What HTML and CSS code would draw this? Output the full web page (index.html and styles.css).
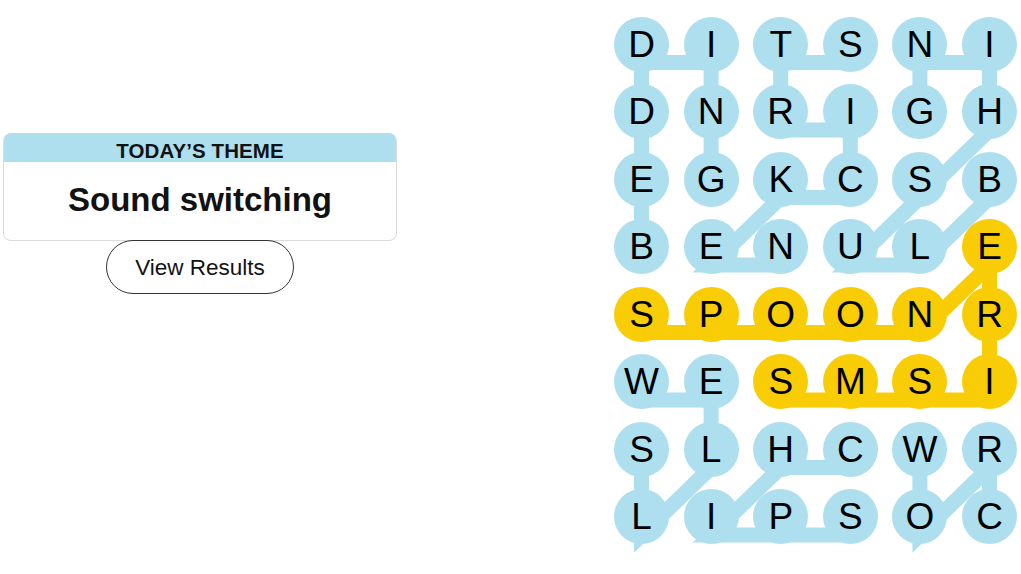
FILE: index.html
```html
<!DOCTYPE html>
<html lang="en">
<head>
<meta charset="utf-8">
<title>Strands</title>
<link rel="stylesheet" href="styles.css">
</head>
<body>
<main class="page">
  <section class="hint">
    <div class="theme-card">
      <div class="theme-head">TODAY’S THEME</div>
      <div class="theme-body">Sound switching</div>
    </div>
    <button class="results-btn" type="button">View Results</button>
  </section>

  <section class="board">
    <svg class="paths" width="403" height="528" viewBox="0 0 403 528" aria-hidden="true">
      <g fill="none" stroke-width="15" stroke-linejoin="miter">
        <polyline class="line-blue" points="27.5,248 27.5,180.5 27.5,113 27.5,45.5 97.1,45.5 97.1,113 97.1,180.5"/>
        <polyline class="line-blue" points="236.3,45.5 166.7,45.5 166.7,113 236.3,113 236.3,180.5 166.7,180.5 97.1,248 166.7,248"/>
        <polyline class="line-blue" points="375.5,180.5 305.9,248 236.3,248 305.9,180.5 375.5,113 375.5,45.5 305.9,45.5 305.9,113"/>
        <polyline class="line-blue" points="27.5,383 97.1,383 97.1,450.5 27.5,518 27.5,450.5"/>
        <polyline class="line-blue" points="236.3,450.5 166.7,450.5 97.1,518 166.7,518 236.3,518"/>
        <polyline class="line-blue" points="375.5,518 375.5,450.5 305.9,518 305.9,450.5"/>
        <polyline class="line-yellow" points="27.5,315.5 97.1,315.5 166.7,315.5 236.3,315.5 305.9,315.5 375.5,248 375.5,315.5 375.5,383 305.9,383 236.3,383 166.7,383"/>
      </g>
    </svg>

    <div class="cell">D</div><div class="cell">I</div><div class="cell">T</div><div class="cell">S</div><div class="cell">N</div><div class="cell">I</div>
    <div class="cell">D</div><div class="cell">N</div><div class="cell">R</div><div class="cell">I</div><div class="cell">G</div><div class="cell">H</div>
    <div class="cell">E</div><div class="cell">G</div><div class="cell">K</div><div class="cell">C</div><div class="cell">S</div><div class="cell">B</div>
    <div class="cell">B</div><div class="cell">E</div><div class="cell">N</div><div class="cell">U</div><div class="cell">L</div><div class="cell span">E</div>
    <div class="cell span">S</div><div class="cell span">P</div><div class="cell span">O</div><div class="cell span">O</div><div class="cell span">N</div><div class="cell span">R</div>
    <div class="cell">W</div><div class="cell">E</div><div class="cell span">S</div><div class="cell span">M</div><div class="cell span">S</div><div class="cell span">I</div>
    <div class="cell">S</div><div class="cell">L</div><div class="cell">H</div><div class="cell">C</div><div class="cell">W</div><div class="cell">R</div>
    <div class="cell">L</div><div class="cell">I</div><div class="cell">P</div><div class="cell">S</div><div class="cell">O</div><div class="cell">C</div>
  </section>
</main>
</body>
</html>
```

FILE: styles.css
```css
* { box-sizing: border-box; }

html, body {
  margin: 0;
  padding: 0;
  background: #ffffff;
}

body {
  font-family: "Liberation Sans", Arial, sans-serif;
  color: #121212;
  width: 1021px;
  height: 574px;
  overflow: hidden;
}

.page {
  display: flex;
  justify-content: space-between;
  align-items: flex-start;
  width: 1021px;
}

/* ---- left: theme card ---- */
.hint {
  width: 394px;
  margin-left: 3px;
  padding-top: 133px;
  display: flex;
  flex-direction: column;
  align-items: center;
}

.theme-card {
  width: 394px;
  border: 1px solid #dcdcdc;
  border-top: 0;
  border-radius: 8px;
  overflow: hidden;
  background: #fff;
}

.theme-head {
  height: 29px;
  background: #aedfee;
  display: flex;
  align-items: center;
  justify-content: center;
  padding-top: 6px;
  font-size: 20.5px;
  font-weight: 700;
  letter-spacing: 0.1px;
  color: #121212;
}

.theme-body {
  height: 78px;
  display: flex;
  align-items: center;
  justify-content: center;
  padding-bottom: 2px;
  font-size: 33px;
  font-weight: 700;
  color: #121212;
}

.results-btn {
  margin-top: -1px;
  width: 188px;
  height: 54px;
  border: 1px solid #333;
  border-radius: 27px;
  background: #fff;
  font-family: "Liberation Sans", Arial, sans-serif;
  font-size: 22.5px;
  color: #121212;
  padding: 2px 0 0;
}

/* ---- right: letter board ---- */
.board {
  position: relative;
  margin-top: 16.7px;
  margin-right: 4px;
  display: grid;
  grid-template-columns: repeat(6, 55px);
  grid-auto-rows: 55px;
  column-gap: 14.6px;
  row-gap: 12.5px;
}

.paths {
  position: absolute;
  left: 0;
  top: 0;
  overflow: visible;
}

.line-blue { stroke: #aedfee; }
.line-yellow { stroke: #f8cd05; }

.cell {
  position: relative;
  width: 55px;
  height: 55px;
  border-radius: 50%;
  background: #aedfee;
  display: flex;
  align-items: center;
  justify-content: center;
  font-size: 37px;
  font-weight: 400;
  color: #000;
  line-height: 1;
}

.cell.span {
  background: #f8cd05;
}
```
